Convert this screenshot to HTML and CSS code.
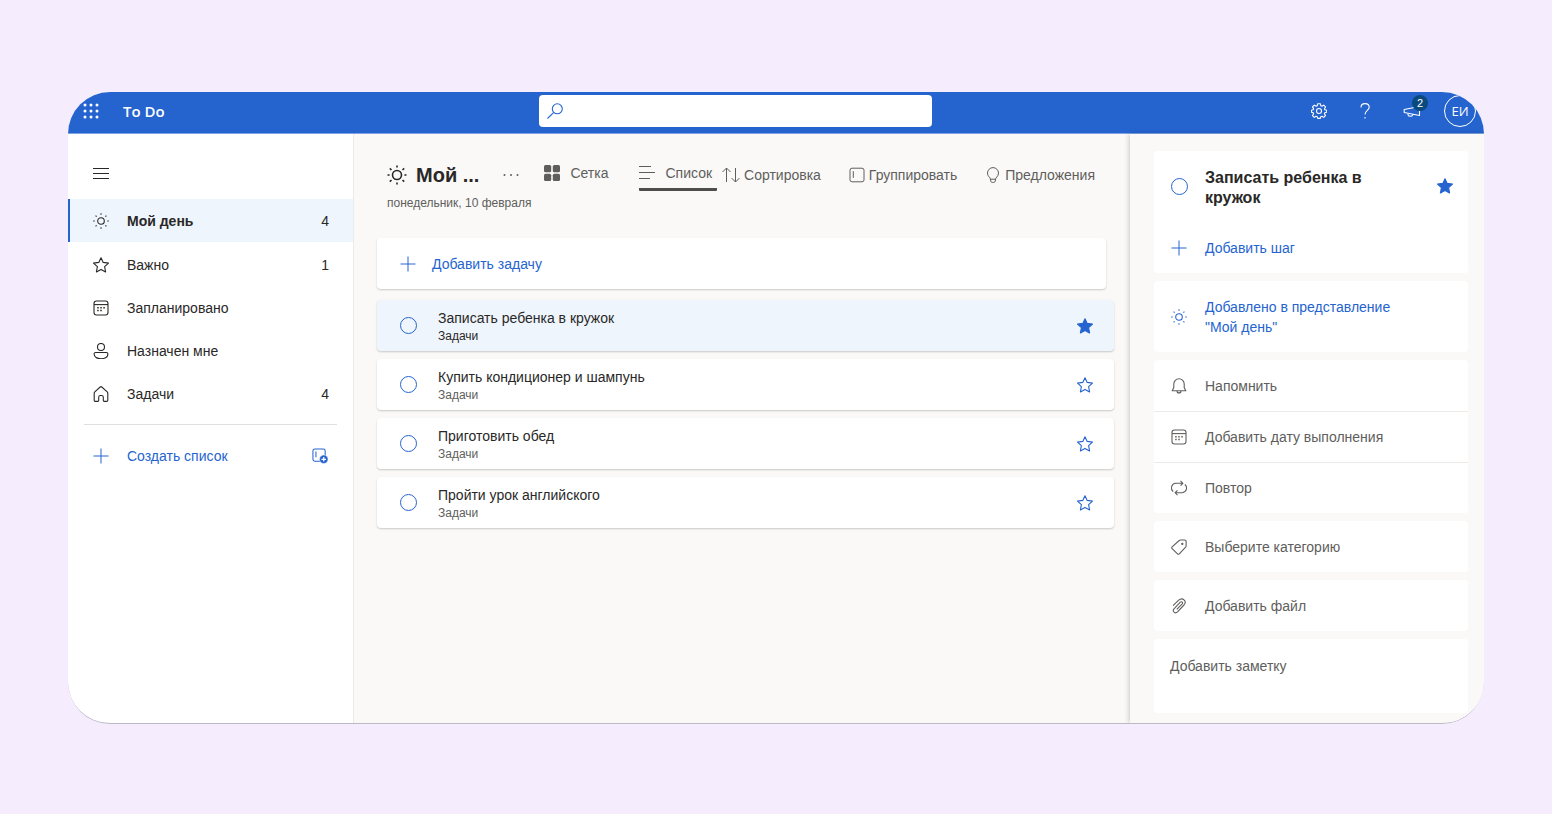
FILE: index.html
```
<!DOCTYPE html>
<html lang="ru">
<head>
<meta charset="utf-8">
<meta name="viewport" content="width=device-width, initial-scale=1">
<title>To Do</title>
<link rel="stylesheet" href="styles.css">
</head>
<body>
<svg class="sprite" aria-hidden="true">
  <symbol id="sun" viewBox="0 0 16 16"><circle cx="8" cy="8" r="3.3"/><path d="M8 .2v1.500M8 14.300v1.500M.2 8h1.500M14.300 8h1.500M2.600 2.600l1 1M12.400 12.400l1 1M2.600 13.400l1-1M12.400 3.600l1-1"/></symbol>
  <symbol id="sun-large" viewBox="0 0 20 20"><circle cx="10" cy="10" r="4.5"/><path d="M10 .5v2.1M10 17.4v2.1M.5 10h2.1M17.4 10h2.1M2.8 3.4l1.7 1.6M15.5 15l1.7 1.6M2.8 16.6L4.500 15M15.500 5l1.700-1.600"/></symbol>
  <symbol id="star" viewBox="0 0 16 16"><path d="M8 .7l2.200 4.700 5.300.7-3.900 3.600 1 5.200L8 12.400l-4.600 2.500 1-5.200L.5 6.100l5.300-.7z"/></symbol>
  <symbol id="calendar" viewBox="0 0 16 16"><rect x="1" y="1" width="14" height="14" rx="2.500"/><path d="M1 4.600h14"/><path class="dots" d="M4.200 7.700h1.500M7.250 7.700h1.500M10.300 7.700h1.500M4.200 10.600h1.500M7.250 10.600h1.500"/></symbol>
  <symbol id="person" viewBox="0 0 16 16"><circle cx="8" cy="4" r="3.500"/><path d="M2.600 9.500h10.800a1.500 1.500 0 0 1 1.500 1.500c0 3-3 4.700-6.900 4.700S1.100 14 1.100 11a1.500 1.500 0 0 1 1.500-1.500z"/></symbol>
  <symbol id="home" viewBox="0 0 16 16"><path d="M1.200 7.200c0-.6.2-1 .6-1.400L7.200 1c.5-.4 1.100-.4 1.600 0l5.400 4.800c.4.4.6.8.6 1.400v7c0 .7-.5 1.200-1.200 1.200h-2.400c-.5 0-.9-.4-.9-.9v-3.300c0-1-.7-1.700-1.700-1.700H7.400c-1 0-1.700.7-1.700 1.700v3.300c0 .5-.4.9-.9.9H2.400c-.7 0-1.200-.5-1.200-1.200z"/></symbol>
  <symbol id="plus" viewBox="0 0 16 16"><path d="M8 .5v15M.5 8h15"/></symbol>
  <symbol id="bell" viewBox="0 0 16 16"><path d="M8 .8a5.200 5.200 0 0 0-5.200 5.200v3.600L1.200 12.700h13.600l-1.600-3.100V6A5.200 5.200 0 0 0 8 .8zM6 12.900a2 2 0 0 0 4 0"/></symbol>
  <symbol id="repeat" viewBox="0 0 16 16"><path d="M2.200 11.500A4.600 4.600 0 0 1 4.700 3.300h7M9.500.9l2.400 2.400-2.400 2.400M13.800 4.500a4.600 4.600 0 0 1-2.500 8.200h-7M6.500 10.300l-2.400 2.400 2.400 2.400"/></symbol>
  <symbol id="tag" viewBox="0 0 16 16"><path d="M9.300 1h4.200c1 0 1.700.7 1.700 1.700l-.1 4.200c0 .5-.2.900-.5 1.200l-6.300 6.700c-.5.6-1.300.6-1.800.1L1.100 9.700C.6 9.200.6 8.400 1.100 7.900L8.200 1.500c.3-.3.700-.5 1.100-.5z"/><circle cx="11.300" cy="4.900" r=".6"/></symbol>
  <symbol id="clip" viewBox="0 0 16 16"><path d="M2 7.600L7.700 2.200c3.800-3.400 8.600.9 5.300 4.800l-6.500 6.900c-2.400 2.300-5.600-.6-3.500-3.100l6.300-6.600c1.300-1.200 3 .3 1.900 1.600L5.800 11.400"/></symbol>
  <symbol id="group" viewBox="0 0 16 16"><rect x="1" y="1.200" width="14" height="13.600" rx="2"/><path d="M4.300 4.200v6.600"/></symbol>
</svg>

<div class="app">
  <header class="topbar">
    <div class="brand">
      <button class="icon-button" aria-label="Приложения"><svg class="icon waffle" viewBox="0 0 16 16"><circle cx="2" cy="2" r="1.500"/><circle cx="8" cy="2" r="1.500"/><circle cx="14" cy="2" r="1.500"/><circle cx="2" cy="8" r="1.500"/><circle cx="8" cy="8" r="1.500"/><circle cx="14" cy="8" r="1.500"/><circle cx="2" cy="14" r="1.500"/><circle cx="8" cy="14" r="1.500"/><circle cx="14" cy="14" r="1.500"/></svg></button>
      <span class="brand-name">To Do</span>
    </div>
    <label class="search">
      <svg class="icon" viewBox="0 0 16 16"><circle cx="10.300" cy="5.800" r="5"/><path d="M6.800 9.400L.5 15.500"/></svg>
      <input type="search" aria-label="Поиск">
    </label>
    <div class="actions">
      <button class="icon-button" aria-label="Параметры"><svg class="icon" viewBox="0 0 16 16"><path d="M6.700.7h2.600l.5 2 1.100.5 1.800-1.100 1.800 1.800-1 1.800.4 1.100 1.800.4v2l-1.900.5-.4 1.100 1.100 1.800-1.800 1.800-1.800-1.100-1.200.5-.4 1.600H6.700l-.5-1.700-1.100-.4-1.800 1.100-1.800-1.800 1.100-1.800-.5-1.200L.5 9.200v-2l1.700-.5.4-1.100-1.100-1.700 1.800-1.800L5.100 3.200l1.100-.5z"/><circle cx="8" cy="8" r="2.500"/></svg></button>
      <button class="icon-button" aria-label="Справка"><svg class="icon" viewBox="0 0 16 16"><path d="M4 4.500C4 2 5.700.6 8 .6s4.200 1.500 4.200 3.700c0 3-4.200 3.300-4.200 7.200M8 14v1.500"/></svg></button>
      <button class="icon-button news" aria-label="Новости"><svg class="icon wide" viewBox="0 0 18 16"><path d="M1.200 6.500L16.500 3.500v9L1.200 9.500zM5 10.300v1.500c0 1.700 4 2 4.600.2l.2-.8"/></svg><span class="badge">2</span></button>
      <button class="avatar" aria-label="Учетная запись">ЕИ</button>
    </div>
  </header>

  <div class="body">
    <nav class="sidebar">
      <button class="icon-button menu" aria-label="Меню"><svg class="icon" viewBox="0 0 16 16"><path d="M0 2.500h16M0 7.500h16M0 12.500h16"/></svg></button>
      <ul class="lists">
        <li><a class="list-link current" href="#" aria-current="page"><svg class="icon"><use href="#sun"/></svg><span>Мой день</span><span class="count">4</span></a></li>
        <li><a class="list-link" href="#"><svg class="icon"><use href="#star"/></svg><span>Важно</span><span class="count">1</span></a></li>
        <li><a class="list-link" href="#"><svg class="icon"><use href="#calendar"/></svg><span>Запланировано</span></a></li>
        <li><a class="list-link" href="#"><svg class="icon"><use href="#person"/></svg><span>Назначен мне</span></a></li>
        <li><a class="list-link" href="#"><svg class="icon"><use href="#home"/></svg><span>Задачи</span><span class="count">4</span></a></li>
      </ul>
      <div class="create">
        <button class="create-list"><svg class="icon thin"><use href="#plus"/></svg>Создать список</button>
        <button class="icon-button" aria-label="Создать группу"><svg class="icon wide" viewBox="0 0 18 17"><rect x="1.500" y="1" width="13" height="13" rx="2"/><path d="M4.700 3.800v6"/><circle class="solid" cx="13" cy="12" r="4.500"/><path class="knockout" d="M13 9.600v4.800M10.600 12h4.800"/></svg></button>
      </div>
    </nav>

    <main class="main">
      <div class="toolbar">
        <h1 class="title"><svg class="icon large"><use href="#sun-large"/></svg><span>Мой ...</span></h1>
        <button class="icon-button more" aria-label="Параметры списка"><svg class="icon" viewBox="0 0 16 16"><circle cx="1.500" cy="8" r="1"/><circle cx="8" cy="8" r="1"/><circle cx="14.500" cy="8" r="1"/></svg></button>
        <div class="views">
          <button class="view"><svg class="icon tiles" viewBox="0 0 16 16"><rect x="0" y="0" width="7.200" height="7.200" rx="1.500"/><rect x="8.800" y="0" width="7.200" height="7.200" rx="1.500"/><rect x="0" y="8.800" width="7.200" height="7.200" rx="1.500"/><rect x="8.800" y="8.800" width="7.200" height="7.200" rx="1.500"/></svg>Сетка</button>
          <button class="view active" aria-pressed="true"><svg class="icon thin" viewBox="0 0 16 16"><path d="M0 1.500h12M0 7.500h16M0 13.500h11"/></svg>Список</button>
        </div>
        <div class="tools">
          <button class="tool"><svg class="icon wide thin" viewBox="0 0 18 16"><path d="M4.500 15V1M.5 5l4-4 4 4M13.500 1v14M9.500 11l4 4 4-4"/></svg>Сортировка</button>
          <button class="tool"><svg class="icon thin"><use href="#group"/></svg>Группировать</button>
          <button class="tool"><svg class="icon thin" viewBox="0 0 16 16"><path d="M8 .6A5.500 5.500 0 0 0 2.500 6c0 1.700.7 3 1.800 4.100.6.600.9 1.100 1 1.700l.5 2.400c.2.800.7 1.200 1.400 1.200h1.600c.7 0 1.200-.4 1.400-1.200l.5-2.400c.1-.6.4-1.100 1-1.700A5.600 5.600 0 0 0 13.500 6 5.500 5.500 0 0 0 8 .6zM5.500 12.200h5"/></svg>Предложения</button>
        </div>
      </div>
      <p class="date">понедельник, 10 февраля</p>

      <button class="add-task"><svg class="icon thin"><use href="#plus"/></svg>Добавить задачу</button>

      <ul class="tasks">
        <li class="task selected"><input class="check" type="checkbox" id="t1"><label for="t1"><span class="task-name">Записать ребенка в кружок</span><span class="task-list">Задачи</span></label><button class="icon-button star filled" aria-label="Снять отметку важности"><svg class="icon"><use href="#star"/></svg></button></li>
        <li class="task"><input class="check" type="checkbox" id="t2"><label for="t2"><span class="task-name">Купить кондиционер и шампунь</span><span class="task-list">Задачи</span></label><button class="icon-button star" aria-label="Отметить как важную"><svg class="icon"><use href="#star"/></svg></button></li>
        <li class="task"><input class="check" type="checkbox" id="t3"><label for="t3"><span class="task-name">Приготовить обед</span><span class="task-list">Задачи</span></label><button class="icon-button star" aria-label="Отметить как важную"><svg class="icon"><use href="#star"/></svg></button></li>
        <li class="task"><input class="check" type="checkbox" id="t4"><label for="t4"><span class="task-name">Пройти урок английского</span><span class="task-list">Задачи</span></label><button class="icon-button star" aria-label="Отметить как важную"><svg class="icon"><use href="#star"/></svg></button></li>
      </ul>
    </main>

    <aside class="detail">
      <section class="card">
        <div class="detail-head"><input class="check" type="checkbox" id="d1"><label for="d1">Записать ребенка в кружок</label><button class="icon-button star filled" aria-label="Снять отметку важности"><svg class="icon"><use href="#star"/></svg></button></div>
        <button class="row blue"><svg class="icon thin"><use href="#plus"/></svg>Добавить шаг</button>
      </section>
      <section class="card"><button class="row tall blue"><svg class="icon"><use href="#sun"/></svg><span>Добавлено в представление "Мой день"</span></button></section>
      <section class="card divided">
        <button class="row"><svg class="icon"><use href="#bell"/></svg>Напомнить</button>
        <button class="row"><svg class="icon"><use href="#calendar"/></svg>Добавить дату выполнения</button>
        <button class="row"><svg class="icon"><use href="#repeat"/></svg>Повтор</button>
      </section>
      <section class="card"><button class="row"><svg class="icon"><use href="#tag"/></svg>Выберите категорию</button></section>
      <section class="card"><button class="row"><svg class="icon"><use href="#clip"/></svg>Добавить файл</button></section>
      <textarea class="card note" aria-label="Заметка" placeholder="Добавить заметку"></textarea>
    </aside>
  </div>
</div>
</body>
</html>
```
FILE: styles.css
```
:root {
  --blue: #2564cf;
  --ink: #292827;
  --grey: #605e5c;
  --canvas: #faf9f8;
  --tint: #eff5fc;
}

* { box-sizing: border-box; }

body {
  margin: 0;
  min-height: 100vh;
  padding: 92px 68px 90px;
  background: #f5ecfe;
  color: var(--ink);
  font: 14px/20px "Liberation Sans", Arial, sans-serif;
}

button, input, textarea { font: inherit; color: inherit; }

button {
  display: flex;
  align-items: center;
  border: 0;
  padding: 0;
  background: none;
  text-align: left;
  cursor: pointer;
}

ul { margin: 0; padding: 0; list-style: none; }

.sprite { position: absolute; width: 0; height: 0; }

.icon {
  flex: none;
  width: 16px;
  height: 16px;
  fill: none;
  stroke: currentColor;
  stroke-width: 1.1;
  stroke-linejoin: round;
}
.icon.wide { width: 18px; }
.icon.large { width: 20px; height: 20px; stroke-width: 1.6; }
.icon.thin { stroke-width: 1; }
.icon .solid { fill: currentColor; stroke: #fff; stroke-width: 0.5; }
.icon .knockout { stroke: #fff; stroke-width: 1.3; }
.dots { stroke-width: 1.5; }
.waffle, .more .icon, .tiles { fill: currentColor; stroke: none; }

.app {
  overflow: hidden;
  border-radius: 42px;
  border-bottom: 1px solid #bdb8c6;
  background: #fff;
}

.topbar {
  display: flex;
  align-items: center;
  height: 42px;
  padding: 0 8px 4px 15px;
  border-bottom: 1px solid #7ea3e4;
  background: var(--blue);
  color: #fff;
}
.brand {
  display: flex;
  flex: 0 0 456px;
  align-items: center;
  gap: 24px;
}
.brand-name { font: 600 15px/20px "Open Sans", "Noto Sans", sans-serif; }
.search {
  display: flex;
  flex: 0 1 393px;
  align-items: center;
  gap: 8px;
  height: 32px;
  padding: 0 8px;
  border-radius: 4px;
  background: #fff;
  color: var(--blue);
}
.search input {
  flex: 1;
  min-width: 0;
  border: 0;
  outline: 0;
  background: none;
}
.actions {
  display: flex;
  align-items: center;
  gap: 30px;
  margin-left: auto;
}
.news { position: relative; }
.badge {
  position: absolute;
  top: -8px;
  right: -7px;
  width: 16px;
  height: 16px;
  border-radius: 50%;
  background: #0b4a7c;
  font-size: 11px;
  line-height: 16px;
  text-align: center;
}
.avatar {
  justify-content: center;
  width: 32px;
  height: 32px;
  margin-left: -7px;
  border: 1px solid #fff;
  border-radius: 50%;
  font-family: "Open Sans", "Noto Sans", sans-serif;
  font-size: 13px;
}

.body { display: flex; }

.sidebar {
  flex: 0 0 286px;
  border-right: 1px solid #edebe9;
}
.menu { margin: 32px 0 17px 25px; }
.list-link {
  display: flex;
  align-items: center;
  gap: 18px;
  height: 43px;
  padding: 2px 24px 0 25px;
  color: inherit;
  text-decoration: none;
}
.list-link.current {
  padding: 0 24px 0 23px;
  border-left: 2px solid var(--blue);
  background: var(--tint);
}
.current span:not(.count) { font-weight: bold; }
.count { margin-left: auto; }
.create {
  display: flex;
  align-items: center;
  justify-content: space-between;
  margin: 10px 16px 0;
  padding: 21px 8px 0 9px;
  border-top: 1px solid #e1dfdd;
  color: var(--blue);
}
.create-list { gap: 18px; }

.main {
  flex: 1;
  min-width: 0;
  padding: 25px 16px 0 23px;
  background: var(--canvas);
}
.toolbar {
  display: flex;
  align-items: center;
  padding: 0 4px 0 10px;
  color: var(--grey);
  white-space: nowrap;
}
.title {
  display: flex;
  align-items: center;
  gap: 9px;
  margin: 0;
  color: var(--ink);
  font-size: 20px;
  line-height: 24px;
}
.more { margin-left: 24px; }
.views {
  display: flex;
  gap: 31px;
  margin-left: 25px;
}
.view {
  gap: 10px;
  height: 32px;
  padding-bottom: 2px;
  border-bottom: 3px solid transparent;
}
.view.active { padding-right: 5px; border-color: #4f4d4b; border-radius: 1px; }
.tools {
  display: flex;
  flex: 1;
  justify-content: space-between;
  margin-left: 5px;
  padding-right: 15px;
}
.tool { gap: 4px; }
.date {
  margin: 2px 10px 25px;
  color: var(--grey);
  font-size: 12px;
}

.add-task {
  width: calc(100% - 8px);
  height: 51px;
  gap: 16px;
  padding: 0 23px;
  border-radius: 4px;
  background: #fff;
  box-shadow: 0 1px 2px rgba(0, 0, 0, 0.2);
  color: var(--blue);
}
.tasks {
  display: grid;
  gap: 8px;
  margin-top: 11px;
}
.task {
  display: flex;
  align-items: center;
  gap: 21px;
  height: 51px;
  padding: 0 21px 0 23px;
  border-radius: 4px;
  background: #fff;
  box-shadow: 0 1px 2px rgba(0, 0, 0, 0.2);
}
.task label { flex: 1; padding-top: 3px; }
.task span { display: block; }
.task-name { line-height: 18px; }
.task-list { color: var(--grey); font-size: 12px; line-height: 18px; }
.selected { background: var(--tint); }
.selected .task-list { color: var(--ink); }

.check {
  flex: none;
  width: 17px;
  height: 17px;
  margin: 0;
  border: 1px solid var(--blue);
  border-radius: 50%;
  appearance: none;
}
.star { color: var(--blue); }
.star.filled .icon { fill: currentColor; }

.detail {
  display: grid;
  flex: 0 0 354px;
  align-content: start;
  gap: 8px;
  padding: 17px 16px 10px 24px;
  background: var(--canvas);
  box-shadow: -1px 0 5px rgba(0, 0, 0, 0.2);
}
.card {
  border: 0;
  border-radius: 4px;
  background: #fff;
}
.detail-head {
  display: flex;
  align-items: center;
  gap: 17px;
  padding: 17px 15px 0 17px;
}
.detail-head .check, .detail-head .star { margin-bottom: 4px; }
.detail-head label {
  flex: 1;
  padding-right: 40px;
  font-size: 16px;
  font-weight: bold;
}
.row {
  gap: 18px;
  width: 100%;
  height: 51px;
  padding: 0 60px 0 17px;
  color: var(--grey);
}
.detail-head + .row { margin-top: 14px; }
.row.tall { height: 71px; }
.row.blue { color: var(--blue); }
.divided .row + .row { border-top: 1px solid #edebe9; }
.note {
  width: 100%;
  height: 74px;
  padding: 17px 16px;
  outline: 0;
  resize: none;
}
.note::placeholder { color: var(--grey); opacity: 1; }
```
